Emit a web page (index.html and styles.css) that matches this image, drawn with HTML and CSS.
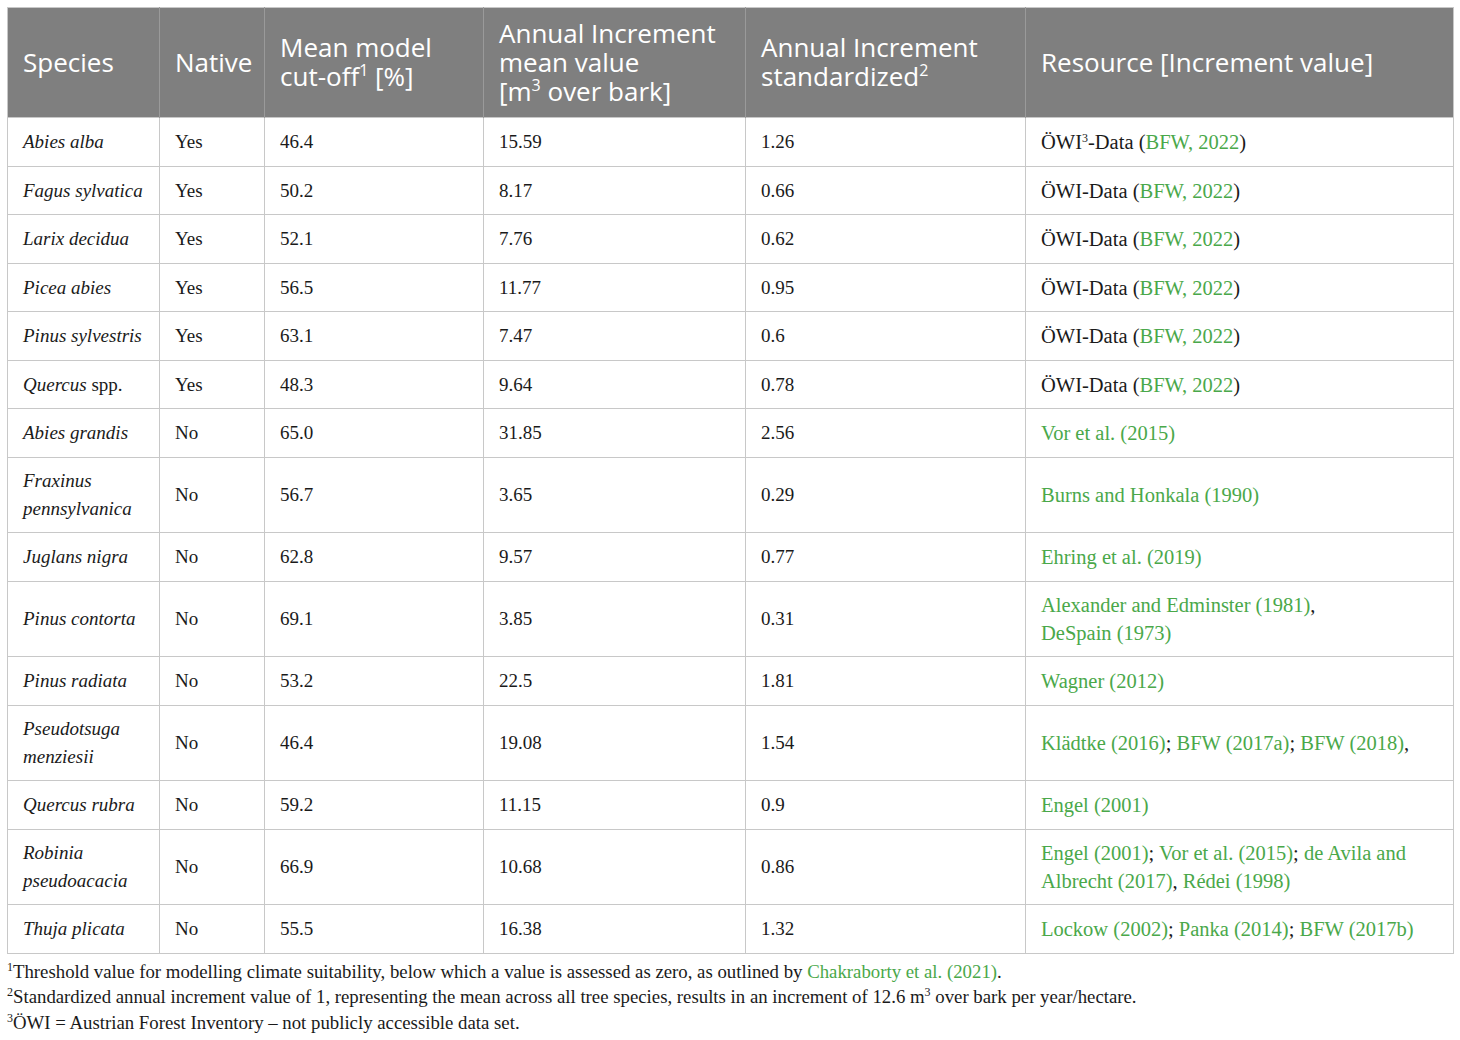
FILE: index.html
```html
<!DOCTYPE html>
<html lang="en">
<head>
    <meta charset="UTF-8">
    <title>Tree species increment</title>
    <link rel="stylesheet" href="styles.css">
</head>
<body>
    <table class="data-table">
        <colgroup>
            <col class="c1"><col class="c2"><col class="c3"><col class="c4"><col class="c5"><col class="c6">
        </colgroup>
        <thead>
            <tr>
                <th>Species</th>
                <th>Native</th>
                <th>Mean model<br>cut-off<sup class="hs">1</sup> [%]</th>
                <th>Annual Increment<br>mean value<br>[m<sup class="hs">3</sup> over bark]</th>
                <th>Annual Increment<br>standardized<sup class="hs">2</sup></th>
                <th>Resource [Increment value]</th>
            </tr>
        </thead>
        <tbody>
            <tr><td><i>Abies alba</i></td><td>Yes</td><td>46.4</td><td>15.59</td><td>1.26</td><td class="res">ÖWI<sup>3</sup>-Data (<a>BFW, 2022</a>)</td></tr>
            <tr><td><i>Fagus sylvatica</i></td><td>Yes</td><td>50.2</td><td>8.17</td><td>0.66</td><td class="res">ÖWI-Data (<a>BFW, 2022</a>)</td></tr>
            <tr><td><i>Larix decidua</i></td><td>Yes</td><td>52.1</td><td>7.76</td><td>0.62</td><td class="res">ÖWI-Data (<a>BFW, 2022</a>)</td></tr>
            <tr><td><i>Picea abies</i></td><td>Yes</td><td>56.5</td><td>11.77</td><td>0.95</td><td class="res">ÖWI-Data (<a>BFW, 2022</a>)</td></tr>
            <tr><td><i>Pinus sylvestris</i></td><td>Yes</td><td>63.1</td><td>7.47</td><td>0.6</td><td class="res">ÖWI-Data (<a>BFW, 2022</a>)</td></tr>
            <tr><td><i>Quercus</i> spp.</td><td>Yes</td><td>48.3</td><td>9.64</td><td>0.78</td><td class="res">ÖWI-Data (<a>BFW, 2022</a>)</td></tr>
            <tr><td><i>Abies grandis</i></td><td>No</td><td>65.0</td><td>31.85</td><td>2.56</td><td class="res"><a>Vor et al. (2015)</a></td></tr>
            <tr class="tall"><td><i>Fraxinus pennsylvanica</i></td><td>No</td><td>56.7</td><td>3.65</td><td>0.29</td><td class="res"><a>Burns and Honkala (1990)</a></td></tr>
            <tr><td><i>Juglans nigra</i></td><td>No</td><td>62.8</td><td>9.57</td><td>0.77</td><td class="res"><a>Ehring et al. (2019)</a></td></tr>
            <tr class="tall"><td><i>Pinus contorta</i></td><td>No</td><td>69.1</td><td>3.85</td><td>0.31</td><td class="res"><a>Alexander and Edminster (1981)</a>,<br><a>DeSpain (1973)</a></td></tr>
            <tr><td><i>Pinus radiata</i></td><td>No</td><td>53.2</td><td>22.5</td><td>1.81</td><td class="res"><a>Wagner (2012)</a></td></tr>
            <tr class="tall"><td><i>Pseudotsuga menziesii</i></td><td>No</td><td>46.4</td><td>19.08</td><td>1.54</td><td class="res"><a>Klädtke (2016)</a>; <a>BFW (2017a)</a>; <a>BFW (2018)</a>,</td></tr>
            <tr><td><i>Quercus rubra</i></td><td>No</td><td>59.2</td><td>11.15</td><td>0.9</td><td class="res"><a>Engel (2001)</a></td></tr>
            <tr class="tall"><td><i>Robinia pseudoacacia</i></td><td>No</td><td>66.9</td><td>10.68</td><td>0.86</td><td class="res"><a>Engel (2001)</a>; <a>Vor et al. (2015)</a>; <a>de Avila and</a><br><a>Albrecht (2017)</a>, <a>Rédei (1998)</a></td></tr>
            <tr><td><i>Thuja plicata</i></td><td>No</td><td>55.5</td><td>16.38</td><td>1.32</td><td class="res"><a>Lockow (2002)</a>; <a>Panka (2014)</a>; <a>BFW (2017b)</a></td></tr>
        </tbody>
    </table>
    <div class="notes">
        <p><sup>1</sup>Threshold value for modelling climate suitability, below which a value is assessed as zero, as outlined by <a>Chakraborty et al. (2021)</a>.</p>
        <p><sup>2</sup>Standardized annual increment value of 1, representing the mean across all tree species, results in an increment of 12.6 m<sup>3</sup> over bark per year/hectare.</p>
        <p><sup>3</sup>ÖWI = Austrian Forest Inventory – not publicly accessible data set.</p>
    </div>
</body>
</html>
```

FILE: styles.css
```css
body{
    margin:0;
    padding:7px;
    background:#fff;
    color:#1a1a1a;
    font-family:"Liberation Serif","Times New Roman",serif;
}
.data-table{
    width:1446px;
    border-collapse:collapse;
    table-layout:fixed;
    border:1px solid #c8c8c8;
}
.c1{width:152px}
.c2{width:105px}
.c3{width:219px}
.c4{width:262px}
.c5{width:280px}
.c6{width:428px}
th{
    background:#7f7f7f;
    color:#fff;
    font-family:"Open Sans","Noto Sans",sans-serif;
    font-weight:400;
    font-size:26px;
    line-height:29px;
    text-align:left;
    padding:10px 15px 11px 15px;
    height:88px;
    border-left:1px solid #9a9a9a;
    vertical-align:middle;
    white-space:nowrap;
}
th:first-child{
    border-left:0;
}
.hs{
    font-size:16px;
    line-height:0;
    vertical-align:10px;
}
td{
    font-size:19px;
    line-height:28px;
    padding:10px 15px 9.5px 15px;
    height:28px;
    border:1px solid #c8c8c8;
    vertical-align:middle;
}
tr.tall td{
    height:56px;
    padding:9.5px 15px 9px 15px;
}
td.res{
    font-size:20.5px;
}
sup{
    font-size:12px;
    line-height:0;
    vertical-align:7px;
}
a{
    color:#4aa84a;
}
.notes{
    font-size:18.8px;
    line-height:25.5px;
    padding-top:5px;
}
.notes p{
    margin:0;
}
.notes sup{
    font-size:12px;
    vertical-align:7px;
}
```
